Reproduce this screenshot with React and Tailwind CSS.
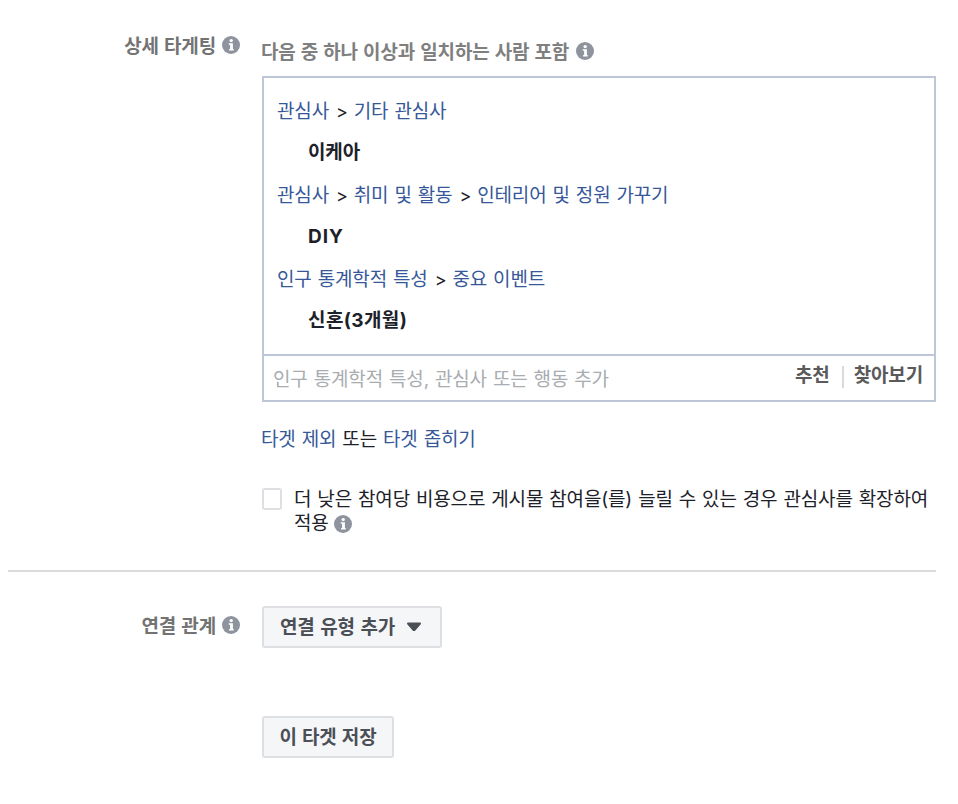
const font = "font-['Inter','Noto_Sans_CJK_KR',sans-serif]";

const paths = [
  { crumbs: ["관심사", "기타 관심사"], value: "이케아", tracking: "tracking-[-0.15px]" },
  { crumbs: ["관심사", "취미 및 활동", "인테리어 및 정원 가꾸기"], value: "DIY", tracking: "tracking-[1px]" },
  { crumbs: ["인구 통계학적 특성", "중요 이벤트"], value: "신혼(3개월)", tracking: "tracking-[0.4px]" },
];

const InfoIcon = () => (
  <svg className="h-[18px] w-[18px] shrink-0" viewBox="0 0 18 18">
    <circle cx="9" cy="9" r="9" fill="#8d949e" />
    <circle cx="9.2" cy="4.6" r="1.7" fill="#fff" />
    <path d="M6.7 7.2h4.2v5.8h.8v1.5H7.1V13h1V8.8H6.7z" fill="#fff" />
  </svg>
);

const App = () => {
  return (
    <div className={`h-[804px] w-[958px] overflow-hidden bg-white pl-2 pr-[22px] pt-8 text-[19px] leading-6 tracking-[-0.15px] text-[#1d2129] [word-spacing:0.8px] ${font}`}>
      <section className="flex h-[540px] border-b-2 border-[#dadada]">
        <div className="flex h-[26px] w-[232px] shrink-0 items-center justify-end gap-1.5 font-bold text-[#737373]">
          <span className="whitespace-nowrap pt-[3px]">상세 타게팅</span>
          <InfoIcon />
        </div>
        <div className="ml-[22px] w-[674px] pt-1.5">
          <div className="flex h-[26px] items-center gap-[7px] font-bold text-[#7f7f7f]">
            <span className="-ml-px whitespace-nowrap pt-[3px]">다음 중 하나 이상과 일치하는 사람 포함</span>
            <InfoIcon />
          </div>
          <div className="mt-3 border-2 border-[#bdc7d8]">
            <div className="h-[276px] pl-[13px] pt-[13px]">
              {paths.map((path) => (
                <div key={path.value}>
                  <div className="flex h-[42px] items-center gap-[7px] whitespace-nowrap">
                    {path.crumbs.map((crumb, index) => (
                      <span key={crumb} className="flex gap-[6px]">
                        {index > 0 && <span className="text-[18px]">&gt;</span>}
                        <a className="text-[#365899]">{crumb}</a>
                      </span>
                    ))}
                  </div>
                  <div className={`flex h-[42px] items-center pb-0.5 pl-[31px] font-bold ${path.tracking}`}>{path.value}</div>
                </div>
              ))}
            </div>
            <div className="flex h-[46px] items-center justify-between border-t-2 border-[#bdc7d8] pl-[9px] pr-[11px]">
              <span className="pt-[3px] text-[#a9acb0]">인구 통계학적 특성, 관심사 또는 행동 추가</span>
              <div className="flex items-center pb-1.5 font-bold text-[#5a5a5a]">
                <span className="pt-0.5">추천</span>
                <span className="ml-3 mr-2.5 mt-1 h-[22px] w-0.5 bg-[#dadada]" />
                <span className="pt-0.5">찾아보기</span>
              </div>
            </div>
          </div>
          <p className="-ml-px mt-[26px]">
            <a className="text-[#365899]">타겟 제외</a> 또는 <a className="text-[#365899]">타겟 좁히기</a>
          </p>
          <div className="mt-9 flex gap-3">
            <span className="h-[22px] w-5 shrink-0 rounded-[3px] border-2 border-[#dddfe2]" />
            <div className="whitespace-nowrap">
              <p>더 낮은 참여당 비용으로 게시물 참여을(를) 늘릴 수 있는 경우 관심사를 확장하여</p>
              <p className="flex items-center gap-[5px]">적용 <InfoIcon /></p>
            </div>
          </div>
        </div>
      </section>
      <section className="flex pt-[34px]">
        <div className="flex h-[38px] w-[232px] shrink-0 items-center justify-end gap-1.5 font-bold text-[#737373]">
          <span className="pt-[3px]">연결 관계</span>
          <InfoIcon />
        </div>
        <div className="ml-[22px]">
          <button className="flex h-[42px] w-[180px] items-center gap-[11px] rounded-[3px] border-2 border-[#dddfe2] bg-[#f5f6f8] pl-4 font-bold text-[#4b4f56]">
            <span className="pt-0.5 [word-spacing:1.2px]">연결 유형 추가</span>
            <svg className="h-[10px] w-4" viewBox="0 0 16 10"><path d="M2 1.5h12L8.4 8H7.6z" fill="#4b4f56" stroke="#4b4f56" strokeWidth="2" strokeLinejoin="round" /></svg>
          </button>
          <button className="mt-[68px] flex h-[42px] w-[132px] items-center justify-center rounded-[3px] border-2 border-[#dddfe2] bg-[#f5f6f8] font-bold text-[#4b4f56]">
            <span className="pt-0.5 [word-spacing:0.8px]">이 타겟 저장</span>
          </button>
        </div>
      </section>
    </div>
  );
};

export default App;
